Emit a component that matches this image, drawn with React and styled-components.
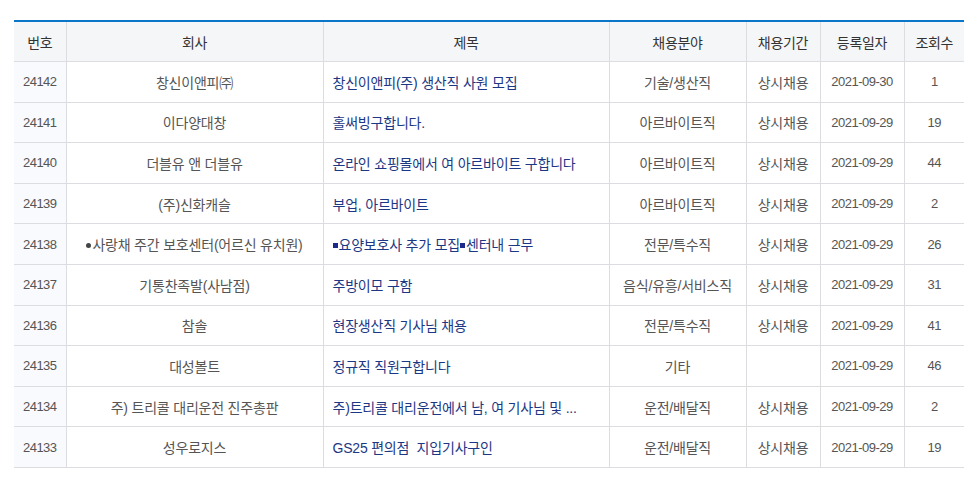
import styled, { createGlobalStyle } from 'styled-components';

const GlobalStyle = createGlobalStyle`
	body {
		margin: 0;
		background: #fff;
		font-family: "Liberation Sans", "Noto Sans CJK KR", sans-serif;
	}
`;

const Wrap = styled.div`
	padding: 20px 12px 0 14px;
`;

const Table = styled.table`
	width: 950px;
	border-collapse: collapse;
	table-layout: fixed;
	border-top: 2px solid #0a76c8;
	border-bottom: 1px solid #bcbec2;
	font-size: 14px;
	letter-spacing: -0.2px;
`;

const Th = styled.th`
	height: 39px;
	background: #f5f6f8;
	color: #333;
	font-weight: normal;
	font-size: 14px;
	letter-spacing: -0.3px;
	text-align: center;
	border-bottom: 1px solid #dcdde0;
	border-left: 1px solid #dcdde0;
	padding: 0;

	&:first-child {
		border-left: none;
	}
`;

const Td = styled.td`
	height: 39.6px;
	color: ${p => (p.$title ? '#1c3783' : '#555')};
	text-align: ${p => (p.$title ? 'left' : 'center')};
	padding: ${p => (p.$title ? '0 9px' : '0')};
	background: ${p => (p.$num ? '#f9fafd' : '#fff')};
	font-size: ${p => (p.$digits ? '13px' : '14px')};
	letter-spacing: ${p => (p.$digits ? '-0.5px' : '-0.2px')};
	border-bottom: 1px solid #dcdde0;
	border-left: 1px solid #dcdde0;
	white-space: nowrap;
	overflow: hidden;

	&:first-child {
		border-left: none;
	}
`;

const Mark = styled.span`
	display: inline-block;
	width: 5px;
	height: 5px;
	background: ${p => p.color};
	border-radius: ${p => (p.$round ? '50%' : '0')};
	margin-right: 1px;
	vertical-align: 2px;
`;

const cols = [52, 257, 286, 137, 74, 84, 60];
const heads = ['번호', '회사', '제목', '채용분야', '채용기간', '등록일자', '조회수'];

const rows = [
	['24142', '창신이앤피㈜', '창신이앤피(주) 생산직 사원 모집', '기술/생산직', '상시채용', '2021-09-30', '1'],
	['24141', '이다양대창', '홀써빙구합니다.', '아르바이트직', '상시채용', '2021-09-29', '19'],
	['24140', '더블유 앤 더블유', '온라인 쇼핑몰에서 여 아르바이트 구합니다', '아르바이트직', '상시채용', '2021-09-29', '44'],
	['24139', '(주)신화캐슬', '부업, 아르바이트', '아르바이트직', '상시채용', '2021-09-29', '2'],
	['24138', 'dot', 'sq', '전문/특수직', '상시채용', '2021-09-29', '26'],
	['24137', '기통찬족발(사남점)', '주방이모 구함', '음식/유흥/서비스직', '상시채용', '2021-09-29', '31'],
	['24136', '참솔', '현장생산직 기사님 채용', '전문/특수직', '상시채용', '2021-09-29', '41'],
	['24135', '대성볼트', '정규직 직원구합니다', '기타', '', '2021-09-29', '46'],
	['24134', '주) 트리콜 대리운전 진주총판', '주)트리콜 대리운전에서 남, 여 기사님 및 ...', '운전/배달직', '상시채용', '2021-09-29', '2'],
	['24133', '성우로지스', 'GS25 편의점  지입기사구인', '운전/배달직', '상시채용', '2021-09-29', '19'],
];

const Company = ({ value }) =>
	value === 'dot' ? (
		<>
			<Mark color="#444" $round />사랑채 주간 보호센터(어르신 유치원)
		</>
	) : (
		value
	);

const Title = ({ value }) =>
	value === 'sq' ? (
		<>
			<Mark color="#1c2a8a" />요양보호사 추가 모집<Mark color="#1c2a8a" />센터내 근무
		</>
	) : (
		<span style={{ whiteSpace: 'pre' }}>{value}</span>
	);

const App = () => (
	<>
		<GlobalStyle />
		<Wrap>
			<Table>
				<colgroup>
					{cols.map((w, i) => (
						<col key={i} style={{ width: w }} />
					))}
				</colgroup>
				<thead>
					<tr>
						{heads.map(h => (
							<Th key={h}>{h}</Th>
						))}
					</tr>
				</thead>
				<tbody>
					{rows.map(r => (
						<tr key={r[0]}>
							<Td $num $digits>{r[0]}</Td>
							<Td><Company value={r[1]} /></Td>
							<Td $title><Title value={r[2]} /></Td>
							<Td>{r[3]}</Td>
							<Td>{r[4]}</Td>
							<Td $digits>{r[5]}</Td>
							<Td $digits>{r[6]}</Td>
						</tr>
					))}
				</tbody>
			</Table>
		</Wrap>
	</>
);

export default App;
